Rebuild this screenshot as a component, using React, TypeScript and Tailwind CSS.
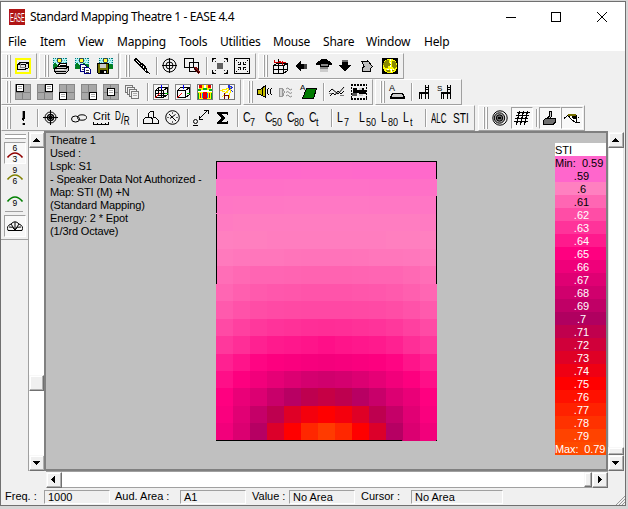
import React from "react";

type Kids = { children?: React.ReactNode };

/* ---------- colour scale ---------- */

const STOPS: [number, number[]][] = [
  [0.59, [255, 102, 204]],
  [0.6, [255, 128, 192]],
  [0.65, [255, 0, 128]],
  [0.7, [176, 0, 96]],
  [0.75, [255, 0, 0]],
  [0.8, [255, 84, 0]],
];

function stiColor(v: number): string {
  for (let i = 1; i < STOPS.length; i++) {
    const [hi, b] = STOPS[i];
    const [lo, a] = STOPS[i - 1];
    if (v <= hi) {
      const t = (v - lo) / (hi - lo);
      return `rgb(${a.map((c, k) => Math.round(c + (b[k] - c) * t)).join(",")})`;
    }
  }
  return "rgb(255,84,0)";
}

/* Left half of each row including the centre column; the hall is symmetric. */
const HALF_ROWS: number[][] = [
  [0.591, 0.591, 0.591, 0.591, 0.5912, 0.5915, 0.5915],
  [0.5938, 0.594, 0.594, 0.594, 0.5942, 0.5942, 0.5942],
  [0.596, 0.5965, 0.5965, 0.5965, 0.597, 0.597, 0.597],
  [0.598, 0.599, 0.599, 0.599, 0.599, 0.599, 0.599],
  [0.6, 0.6005, 0.6005, 0.601, 0.601, 0.601, 0.601],
  [0.6025, 0.6035, 0.604, 0.604, 0.6045, 0.605, 0.605],
  [0.607, 0.609, 0.6105, 0.6105, 0.611, 0.6115, 0.6115],
  [0.61, 0.613, 0.615, 0.616, 0.6165, 0.617, 0.617],
  [0.615, 0.618, 0.62, 0.621, 0.6215, 0.622, 0.622],
  [0.621, 0.625, 0.628, 0.63, 0.631, 0.632, 0.6325],
  [0.628, 0.632, 0.637, 0.64, 0.641, 0.642, 0.644],
  [0.637, 0.642, 0.648, 0.651, 0.653, 0.655, 0.6565],
  [0.644, 0.651, 0.658, 0.666, 0.672, 0.677, 0.68],
  [0.65, 0.663, 0.672, 0.685, 0.695, 0.709, 0.714],
  [0.653, 0.669, 0.687, 0.709, 0.73, 0.743, 0.75],
  [0.658, 0.673, 0.696, 0.728, 0.75, 0.773, 0.785],
];
const CELLS = HALF_ROWS.flatMap((r) => [...r, ...r.slice(0, 6).reverse()]);

const LEGEND = Array.from({ length: 21 }, (_, i) => 59 + i);

/* ---------- icon helpers ---------- */

function Ic({ children, w = 16 }: Kids & { w?: number }) {
  return (
    <svg width={w} height="16" viewBox={`0 0 ${w} 16`} fill="none" stroke="none" shapeRendering="crispEdges" className="block shrink-0 overflow-visible">
      {children}
    </svg>
  );
}

const L = ({ d, c = "#000", w = 1, f = "none", aa = false }: { d: string; c?: string; w?: number; f?: string; aa?: boolean }) => (
  <path d={d} stroke={c} strokeWidth={w} fill={f} shapeRendering={aa ? "auto" : "crispEdges"} />
);
const F = ({ d, c = "#000" }: { d: string; c?: string }) => <path d={d} fill={c} />;

const Frame3D = () => (
  <Ic>
    <L d="M1 1H15V15H1Z" c="#ffff00" w={2} />
    <L d="M2.5 6.5H10.5V11.5H2.5ZM4.5 6V4.5H13.5V9.5M4.5 4.5L2.5 6.5M13.5 4.5L10.5 6.5M13.5 9.5L10.5 11.5" f="#e4e4e4" />
    <L d="M5 9.5H11M5.5 5V9" c="#888" />
  </Ic>
);

const Scene = () => (
  <>
    <F d="M0 0H14V9H0Z" c="#b8f4f4" />
    <F d="M0 6L2 5L5 8L9 5L14 7V11H0Z" c="#008020" />
    <path d="M0 .5H14M.5 0V9M13.5 0V7" stroke="#007878" strokeDasharray="1 1" />
    <path d="M1 2.5H13M2 4.5H13" stroke="#50d0d8" strokeDasharray="1 1" />
    <F d="M5 1H8V4H5Z" c="#ffff30" />
    <L d="M4.5 1V4M5 .5H8M8.5 1V4M5 4.5H8" c="#444" />
  </>
);
const PrintIcon = () => (
  <Ic>
    <Scene />
    <L d="M6.5 5.5H13.5L12.5 9.5H4.5Z" f="#fff" />
    <L d="M1.5 10.5L4.5 8.5H15.5V12.5L12.5 15.5H3.5L1.5 13.5Z" f="#c8c8c8" />
    <L d="M2 13.5H13M7 7.5H12M2 10.5H13L15 9" />
    <F d="M4 11H11V12H4Z" c="#eee" />
  </Ic>
);
const CopyIcon = () => (
  <Ic>
    <Scene />
    <L d="M5.5 6.5H9.5L11.5 8.5V13.5H5.5Z" c="#000080" f="#fff" />
    <L d="M9.5 9.5H13.5L15.5 11.5V15.5H9.5Z" c="#000080" f="#fff" />
    <L d="M7 9.5H9M7 11.5H9M11 12.5H14M11 14H14" c="#444" />
  </Ic>
);
const SaveIcon = () => (
  <Ic>
    <g transform="translate(2 0)"><Scene /></g>
    <L d="M.5 5.5H11.5V15.5H1.5L.5 14.5Z" f="#707000" />
    <F d="M3 6H9V10H3Z" c="#c8c8c8" />
    <F d="M3 12H10V15H3Z" />
    <F d="M7 13H9V15H7Z" c="#eee" />
  </Ic>
);
const BrushIcon = () => (
  <Ic>
    <L d="M.5 2L2 .5L7 5.5L5.5 7Z" f="#fff" />
    <F d="M5 6L8 5L12 8L14 14L16 16L11 14L6 9Z" />
    <F d="M7 7H8V8H7ZM9 8H10V10H9ZM11 11H12V13H11Z" c="#fff" />
  </Ic>
);
const TargetIcon = () => (
  <Ic>
    <L d="M7.5 0V15M0 7.5H15" />
    <circle cx="7.5" cy="7.5" r="6.5" stroke="#000" shapeRendering="auto" />
    <circle cx="7.5" cy="7.5" r="3.5" stroke="#000" shapeRendering="auto" />
  </Ic>
);
const RectsIcon = () => (
  <Ic>
    <L d="M.5 .5H9.5V9.5H.5ZM5.5 4.5H14.5V13.5H5.5Z" />
    <F d="M10 9H13L16 14L14 16L10 12Z" c="#801010" />
    <L d="M9.5 9.5L15 15" />
  </Ic>
);
const FitIcon = () => (
  <Ic>
    <F d="M5 5H11V11H5Z" c="#606060" />
    <L d="M.5 4V.5H4M12 .5H15.5V4M.5 12V15.5H4M12 15.5H15.5V12" />
    <path d="M1 1L4 4M15 1L12 4M1 15L4 12M15 15L12 12" stroke="#333" strokeDasharray="1.5 1" />
  </Ic>
);
const ShrinkIcon = () => (
  <Ic>
    <L d="M.5 .5H15.5V15.5H.5Z" />
    <path d="M2 2L6 6M14 2L10 6M2 14L6 10M14 14L10 10" stroke="#000" strokeDasharray="1.5 1" />
    <L d="M6.5 4V6.5H4M9.5 4V6.5H12M4 9.5H6.5V12M9.5 12V9.5H12" />
  </Ic>
);
const RotateIcon = () => (
  <Ic>
    <L d="M1.5 7.5H11.5V15.5H1.5ZM1.5 7.5L4.5 5.5H15.5V12.5L11.5 15.5M11.5 7.5L15.5 5.5M1.5 11.5H15.5M6.5 1V15" />
    <L d="M2.5 2V4.5H9M9 4.5H13.5M10 2.5V6.5M7 3.5H9" c="#d00000" />
  </Ic>
);
const LeftArrow = () => (
  <Ic><F d="M1 8L7 2V6H13V11H7V14Z" /><F d="M10 6H13V11H10Z" c="#444" /></Ic>
);
const HouseArrow = () => (
  <Ic>
    <F d="M0 5L6 1H10L16 5V7H0Z" /><F d="M4 6H12V14H4Z" c="#888" /><F d="M4 11H12V14H4Z" c="#ccc" />
    <L d="M4 6V8.5H12V6" />
  </Ic>
);
const DownArrow = () => (
  <Ic><F d="M4 2H10V7H13L7 14L1 7H4Z" /><F d="M4 2H10V4H4Z" c="#666" /></Ic>
);
const DiagArrow = () => (
  <Ic><L d="M1.5 3.5H7.5V2.5L12.5 8.5L10.5 10.5V13.5H2.5V9.5L4.5 8.5Z" f="#c0c0c0" /></Ic>
);
const GlobeIcon = () => (
  <Ic>
    <F d="M0 0H16V16H0Z" />
    <circle cx="8" cy="8" r="7.3" fill="#ffff00" />
    <F d="M4 2H7V5H9V8H6V10H3L1 6ZM10 3H13L15 8L12 11L10 9V6ZM4 12H8V14L5 14ZM10 12H12V13H10Z" c="#8a8a00" />
    <path d="M8.5 1V9M5 11.5H12M9.5 12V15" stroke="#fff" strokeDasharray="2 1" />
  </Ic>
);

/* Four grey quarters with a sheet placed over one of them. */
const Quad = ({ x, y }: { x: number; y: number }) => (
  <Ic>
    <F d="M0 0H16V16H0Z" c="#a8a8a8" />
    <L d="M7.5 0V16M0 8.5H16" c="#808080" />
    <L d="M.5 0V16M15.5 0V16M0 .5H16M0 15.5H16" c="#888" />
    <g transform={`translate(${x} ${y})`}>
      <L d="M.5 .5H7.5V7.5H.5Z" f="#fff" /><L d="M2 2.5H6M2 4.5H6" c="#aaa" />
    </g>
  </Ic>
);
const StackIcon = () => (
  <Ic>
    {[0, 2, 4, 6].map((n) => (
      <g key={n} transform={`translate(${n} ${n + 1})`}><L d="M.5 .5H7.5V7.5H.5Z" c="#777" f="#f2f2f2" /></g>
    ))}
    <L d="M8 9.5H12M8 11.5H12" c="#aaa" />
  </Ic>
);
const BoxAxes = ({ filled = false }: { filled?: boolean }) => (
  <Ic>
    <L d="M.5 .5H15.5V15.5H.5Z" c="#888" f="#f6f6f6" />
    <L d="M2.5 6.5H10.5V13.5H2.5ZM5.5 3.5H14.5V10.5M2.5 6.5L5.5 3.5M10.5 6.5L14.5 3.5M10.5 13.5L14.5 10.5" />
    {filled && <L d="M5.5 4V11H14M8.5 3V13M3 9.5H14" />}
    <L d="M8.5 1V5" c="#0000ff" /><L d="M12 9.5H15" c="#00c000" /><L d="M2 14L7 9" c="#ff0000" />
  </Ic>
);
const MapsIcon = () => (
  <Ic>
    <L d="M.5 .5H15.5V15.5H.5Z" c="#777" f="#fff" />
    <F d="M2 1H7V6H2ZM9 1H14V6H9Z" c="#ffdf00" /><F d="M2 1H5V4H2ZM11 1H14V4H11Z" c="#e00000" />
    <F d="M1 5H4V7H1ZM6 4H10V6H6ZM12 5H15V7H12Z" c="#00b020" />
    <F d="M1 8H15V15H1Z" c="#ffff00" /><F d="M6 8H10V15H6ZM3 9H4V14H3ZM12 9H13V14H12Z" c="#f00000" />
    <F d="M5 9H6V14H5ZM10 9H11V14H10Z" c="#0080ff" /><F d="M1 9H2V15H1ZM14 9H15V15H14Z" c="#00a020" />
  </Ic>
);
const RayIcon = () => (
  <Ic>
    <L d="M.5 .5H15.5V15.5H.5Z" c="#777" f="#f8f8f8" />
    <L d="M1 6.5L12 4L10 14M2 6.5L9 9M3 13L12 3" c="#ffe800" />
    <L d="M9.5 1.5L13.5 3.5L10.5 5.5ZM12 6L14 8" c="#2030e0" />
    <L d="M5.5 9V15M5 11.5H9.5V15" c="#700000" />
  </Ic>
);
const SpeakerIcon = () => (
  <Ic>
    <L d="M.5 5.5H3.5L8.5 1.5V13.5L3.5 10.5H.5Z" f="#c8c000" /><L d="M5.5 4V12" />
    <L d="M12 4.5H11.5L10.5 6V9L11.5 10.5H12M15 4.5H14.5L13.5 6V9L14.5 10.5H15" />
  </Ic>
);
const WavesIcon = () => (
  <Ic>
    <L d="M.5 4.5H3.5V12.5H.5ZM3.5 4.5Q7 7.5 3.5 12.5" c="#999" f="#d5d5d5" />
    <L d="M7 5Q9 3 10 5T13 5M7 8.5Q9 6.5 10 8.5T13 8.5M7 12Q9 10 10 12T13 12" c="#888" aa />
  </Ic>
);
const AreaIcon = () => (
  <Ic>
    <L d="M5.5 4.5H15.5L12.5 14.5H1.5Z" f="#007a00" />
    <text x="-1" y="6" fontSize="8" fill="#000" className="font-['Liberation_Sans',sans-serif]">A</text>
  </Ic>
);
const CurveIcon = () => (
  <Ic><L d="M0 8L3 5L9 10L15 3M1 12L4 9L6 11L9 7L12 10L15 7" aa /><L d="M0 9.5H3M11 11.5H15" c="#777" /></Ic>
);
const FilmIcon = () => (
  <Ic>
    <path d="M0 1H16M0 15H16" stroke="#000" strokeWidth="2" strokeDasharray="2 1" />
    <path d="M.5 0V16M15.5 0V16" stroke="#000" strokeDasharray="2 1" />
    <F d="M2 4H6V6H9V4H13V6H15V10H12V12H8V9H2Z" /><F d="M8 4H11V6H8ZM8 10H12V12H8Z" c="#ccc" /><F d="M1 9H6V12H1Z" c="#555" />
  </Ic>
);
const DeskIcon = () => (
  <Ic>
    <L d="M3.5 9.5H13.5L15.5 13.5H1.5Z" f="#ccc" /><L d="M1 14.5H16" />
    <text x="0" y="7" fontSize="9" fill="#000" className="font-['Liberation_Sans',sans-serif]">A</text>
  </Ic>
);
const Chair = ({ s = false }: { s?: boolean }) => (
  <Ic>
    {s && <text x="-2" y="7" fontSize="8" fill="#000" className="font-['Liberation_Sans',sans-serif]">S</text>}
    <g transform="translate(2 0)">
      <L d="M6.5 1V15M9.5 1V15M6 3.5H10M6 5.5H10M.5 15V8.5H9.5M2.5 15V9M1 9.5H9" />
    </g>
  </Ic>
);
const BangIcon = () => (
  <Ic><F d="M7 1H10V8L9 11H8L7 8ZM7 13H10V15H7Z" /><F d="M7 1H8V8H7ZM7 13H8V15H7Z" c="#999" /></Ic>
);
const CrossTarget = () => (
  <Ic>
    <circle cx="7.5" cy="7.5" r="5.5" stroke="#000" shapeRendering="auto" />
    <circle cx="7.5" cy="7.5" r="3" stroke="#000" strokeWidth="1.5" shapeRendering="auto" />
    <L d="M7.5 0V15M0 7.5H15" />
    <F d="M6 6H9V9H6Z" />
  </Ic>
);
const ChainIcon = () => (
  <Ic>
    <ellipse cx="4.5" cy="9" rx="4" ry="3" stroke="#000" shapeRendering="auto" />
    <ellipse cx="11" cy="7.5" rx="4.5" ry="2.7" stroke="#000" shapeRendering="auto" />
  </Ic>
);
const HallIcon = () => (
  <Ic><L d="M.5 13.5V9.5L2.5 7.5H5.5V3.5L7.5 1.5H10.5V7.5H12.5L15.5 10.5V13.5ZM5.5 7.5H8.5L9.5 9.5V13.5" w={1.3} /></Ic>
);
const ClockIcon = () => (
  <Ic>
    <circle cx="7.5" cy="7.5" r="6.8" stroke="#000" shapeRendering="auto" />
    <L d="M4 4L11 11M10.5 4.5L5 8.5" aa /><L d="M7.5 2V4M2 7.5H4M11 7.5H13M7.5 11V13" c="#666" />
  </Ic>
);
const VectorIcon = () => (
  <Ic><circle cx="2.5" cy="11.5" r="2" stroke="#000" shapeRendering="auto" /><L d="M0 15.5H5M6 9L15 0M11 .5H15.5V4M6.5 6V9.5H10" /></Ic>
);
const SigmaIcon = () => (
  <Ic><F d="M2 2H13V5H12L11 4H6L10 8L6 12H11L12 11H13V14H2V12L6 8L2 4Z" /></Ic>
);
const SpiralIcon = () => (
  <Ic>
    <circle cx="8" cy="8" r="7.2" stroke="#000" fill="#eee" shapeRendering="auto" />
    <circle cx="7.5" cy="8" r="5.2" stroke="#000" fill="#aaa" shapeRendering="auto" />
    <circle cx="7.5" cy="8" r="3.2" stroke="#000" fill="#666" shapeRendering="auto" />
    <circle cx="7.5" cy="8" r="1.2" fill="#000" />
  </Ic>
);
const MeshIcon = () => (
  <Ic><L d="M5.5 1L2.5 15M9.5 1L6.5 15M13.5 1L10.5 15" w={1.3} /><L d="M3 2.5H16M2 5.5H15M1 8.5H14M0 11.5H14" /></Ic>
);
const SeatIcon = () => (
  <Ic><L d="M7.5 1.5H9.5V6.5L7.5 8.5H5.5V7.5L7.5 6.5Z" f="#ccc" /><L d="M1.5 10.5L3.5 8.5H13.5V12.5L11.5 13.5V14.5H1.5Z" f="#707070" /></Ic>
);
const EyeIcon = () => (
  <Ic>
    <L d="M0 8.5L5 4.5H11L15 7.5" /><L d="M4 4.5H12" c="#777000" w={2} />
    <F d="M5 6H14V8L12 12H9L6 9Z" c="#fff" /><L d="M4.5 6L8 10L12 12.5L13 7M13 12.5H15.5" /><F d="M8 6H13V9H9Z" />
  </Ic>
);

/* ---------- toolbars ---------- */

function Grip() {
  return (
    <div className="ml-1 mr-1 flex h-[22px] w-[5px] shrink-0 justify-between self-center">
      <i className="w-[2px] border-r border-[#a0a0a0] bg-white" />
      <i className="w-[2px] border-r border-[#a0a0a0] bg-white" />
    </div>
  );
}
const Sep = () => <div className="mr-[4px] h-[18px] w-[2px] shrink-0 self-center border-l border-[#a0a0a0] bg-white" />;
const Btn = ({ children }: Kids) => <div className="flex w-[22px] shrink-0 items-center">{children}</div>;
const Pressed = ({ children }: Kids) => (
  <div className="-ml-[3px] mr-[3px] flex h-[22px] w-[22px] shrink-0 items-center self-center border border-b-white border-l-[#a0a0a0] border-r-white border-t-[#a0a0a0] bg-[#f8f8f8] pl-[2px]">{children}</div>
);

function Group({ children, className = "" }: Kids & { className?: string }) {
  return (
    <div className={`flex h-[26px] border-b border-l border-r border-t border-b-[#a0a0a0] border-l-white border-r-[#a0a0a0] border-t-white ${className}`}>
      <Grip />
      {children}
    </div>
  );
}

/* Level and clarity symbols: a slim capital followed by a lowered index. */
const Sub = ({ a, b }: { a: string; b: string }) => (
  <span className="relative -top-px flex items-baseline text-[14px] leading-none">
    <span className="inline-block w-[7px] origin-left scale-x-75">{a}</span>
    <span className="relative top-[4px] inline-block w-[9px] origin-left scale-x-[0.82] text-[11px]">{b}</span>
  </span>
);

/* ---------- scroll bars ---------- */

const Tri = ({ d }: { d: string }) => (
  <svg width="8" height="8" viewBox="0 0 8 8" shapeRendering="crispEdges"><path d={d} fill="#000" /></svg>
);
const bevel = "border border-t-[#f8f8f8] border-l-[#f8f8f8] border-r-[#707070] border-b-[#707070] bg-[#f0f0f0] shadow-[inset_-1px_-1px_0_#b0b0b0,inset_1px_1px_0_#fff]";
const ScrollBtn = ({ d }: { d: string }) => (
  <div className={`flex h-4 w-4 shrink-0 items-center justify-center ${bevel}`}><Tri d={d} /></div>
);
const UP = "M3 2H4V3H5V4H6V5H7V6H0V5H1V4H2V3H3Z";
const DOWN = "M0 2H7V3H6V4H5V5H4V6H3V5H2V4H1V3H0Z";
const LEFT = "M5 0V7H4V6H3V5H2V4H1V3H2V2H3V1H4V0Z";
const RIGHT = "M2 0V7H3V6H4V5H5V4H6V3H5V2H4V1H3V0Z";

const Arc = ({ top, bottom, color }: { top?: string; bottom: string; color: string }) => (
  <svg width="18" height="20" viewBox="0 0 18 20" className="block overflow-visible font-['Liberation_Sans',sans-serif] text-[8.5px]">
    {top && <text x="5.5" y="7">{top}</text>}
    <path d="M.5 13.5Q8 4.5 15.5 13.5" fill="none" stroke={color} strokeWidth="1.7" />
    <text x="5.5" y="17.5">{bottom}</text>
  </svg>
);

const Field = ({ label, value, lw, bw }: { label: string; value: string; lw: string; bw: string }) => (
  <>
    <span className={lw}>{label}</span>
    <span className={`h-[14px] border border-b-white border-l-[#a0a0a0] border-r-white border-t-[#a0a0a0] pl-[3px] leading-[13px] ${bw}`}>{value}</span>
  </>
);

export default function App() {
  return (
    <div className="h-[509px] w-[628px] overflow-hidden bg-[#d6d6d6] pt-px font-['Liberation_Sans',Arial,sans-serif] text-[11px] text-black">
      <div className="flex h-[505px] w-[626px] flex-col border border-[#707070] bg-[#f0f0f0]">
        <header className="flex h-[30px] shrink-0 items-center bg-white pl-2 font-['Noto_Sans',sans-serif]">
          <svg width="16" height="16" viewBox="0 0 16 16" className="mr-[5px] shrink-0">
            <rect width="16" height="16" fill="#b01515" />
            <g transform="translate(1 12.8) scale(.42 1)">
              <text fontSize="13" fill="#fff" className="font-['Liberation_Sans',sans-serif]">EASE</text>
            </g>
          </svg>
          <h1 className="flex-1 whitespace-nowrap text-[12px] tracking-[-0.4px]">Standard Mapping Theatre 1 - EASE 4.4</h1>
          <svg width="105" height="12" viewBox="0 0 105 12" className="mr-[15px]" fill="none" stroke="#000">
            <path d="M1 6.5H11M46.5 1.5H55.5V10.5H46.5Z" shapeRendering="crispEdges" />
            <path d="M92 1L102 11M102 1L92 11" />
          </svg>
        </header>
        <nav className="flex h-[19px] shrink-0 items-center bg-white pl-[7px] font-['Noto_Sans',sans-serif] text-[12px] tracking-[-0.2px]">
          <span className="w-8">File</span>
          <span className="w-[38px]">Item</span>
          <span className="w-[39px]">View</span>
          <span className="w-[62px]">Mapping</span>
          <span className="w-[41px]">Tools</span>
          <span className="w-[53px]">Utilities</span>
          <span className="w-[50px]">Mouse</span>
          <span className="w-[43px]">Share</span>
          <span className="w-[58px]">Window</span>
          <span>Help</span>
        </nav>

        <div className="flex h-[80px] shrink-0 flex-col pt-[2px]">
          <div className="flex">
            <Group className="w-[36px]"><Btn><Frame3D /></Btn></Group>
            <Group className="ml-[2px] w-[80px]"><Btn><PrintIcon /></Btn><Btn><CopyIcon /></Btn><Btn><SaveIcon /></Btn></Group>
            <Group className="ml-px w-[136px]">
              <Btn><BrushIcon /></Btn><Sep /><Btn><TargetIcon /></Btn><Btn><RectsIcon /></Btn><Sep /><Btn><FitIcon /></Btn><Btn><ShrinkIcon /></Btn>
            </Group>
            <Group className="ml-[2px] w-[146px]">
              <Btn><RotateIcon /></Btn><Btn><LeftArrow /></Btn><Btn><HouseArrow /></Btn><Btn><DownArrow /></Btn><Btn><DiagArrow /></Btn><Btn><GlobeIcon /></Btn>
            </Group>
          </div>
          <div className="flex">
            <Group className="w-[240px]">
              <Btn><Quad x={1} y={0} /></Btn><Btn><Quad x={8} y={0} /></Btn><Btn><Quad x={0} y={8} /></Btn><Btn><Quad x={8} y={8} /></Btn><Btn><Quad x={4} y={4} /></Btn><Btn><StackIcon /></Btn>
              <Sep />
              <Btn><BoxAxes filled /></Btn><Btn><BoxAxes /></Btn><Btn><MapsIcon /></Btn><Btn><RayIcon /></Btn>
            </Group>
            <Group className="ml-[2px] w-[130px]">
              <Btn><SpeakerIcon /></Btn><Btn><WavesIcon /></Btn><Btn><AreaIcon /></Btn><Sep /><Btn><CurveIcon /></Btn><Btn><FilmIcon /></Btn>
            </Group>
            <Group className="ml-[2px] w-[87px]"><Btn><DeskIcon /></Btn><Sep /><Btn><Chair /></Btn><Btn><Chair s /></Btn></Group>
          </div>
          <div className="flex">
            <Group className="w-[474px]">
              <Btn><BangIcon /></Btn><Sep /><Btn><CrossTarget /></Btn><Sep />
              <Btn><ChainIcon /></Btn>
              <Btn>
                <span className="flex flex-col">
                  <span className="w-4 text-[11px] leading-[11px]">Crit</span>
                  <svg width="17" height="3" stroke="#000" shapeRendering="crispEdges"><path d="M0 2.5H16M.5 0V3M4.5 1V3M8.5 1V3M12.5 1V3M15.5 0V3" /></svg>
                </span>
              </Btn>
              <Btn>
                <span className="flex w-4 origin-left scale-x-[0.68] items-center text-[12px] leading-none">
                  <span className="relative -top-[2px]">D</span><span className="text-[15px]">/</span><span className="relative top-[3px]">R</span>
                </span>
              </Btn>
              <Sep />
              <Btn><HallIcon /></Btn><Btn><ClockIcon /></Btn><Sep />
              <Btn><VectorIcon /></Btn><Btn><SigmaIcon /></Btn><Sep />
              <Btn><Sub a="C" b="7" /></Btn><Btn><Sub a="C" b="50" /></Btn><Btn><Sub a="C" b="80" /></Btn><Btn><Sub a="C" b="t" /></Btn><Sep />
              <Btn><Sub a="L" b="7" /></Btn><Btn><Sub a="L" b="50" /></Btn><Btn><Sub a="L" b="80" /></Btn><Btn><Sub a="L" b="t" /></Btn><Sep />
              <Btn><span className="w-4 origin-left scale-x-[0.53] text-[15px]">ALC</span></Btn>
              <Btn><span className="w-4 origin-left scale-x-[0.68] text-[15px]">STI</span></Btn>
            </Group>
            <Group className="ml-[3px] w-[107px]">
              <Btn><SpiralIcon /></Btn><Pressed><MeshIcon /></Pressed><Sep /><Pressed><SeatIcon /></Pressed><Pressed><EyeIcon /></Pressed>
            </Group>
          </div>
        </div>

        <main className="flex h-[357px] shrink-0">
          <aside className="flex w-[27px] flex-col pt-px">
            <div className="ml-1 mt-[2px] h-[5px] w-[21px] shrink-0 border-y border-[#a0a0a0] bg-white" />
            <div className="ml-[3px] mt-[3px] h-[22px] w-[22px] shrink-0 border border-b-white border-l-[#a0a0a0] border-r-white border-t-[#a0a0a0] bg-[#f8f8f8] pl-[2px] pt-px"><Arc top="6" bottom="3" color="#900000" /></div>
            <div className="ml-[6px] mt-[2px]"><Arc top="9" bottom="6" color="#808000" /></div>
            <div className="ml-[6px] mt-[2px]"><Arc bottom="9" color="#008000" /></div>
            <div className="ml-1 mt-[3px] h-px w-[18px] shrink-0 bg-[#a0a0a0]" />
            <div className="ml-[3px] mt-[3px] flex h-[22px] w-[22px] shrink-0 items-center border border-b-white border-l-[#a0a0a0] border-r-white border-t-[#a0a0a0] bg-[#f8f8f8] pl-[2px]">
              <svg width="16" height="11" viewBox="0 0 16 11" fill="none" stroke="#000">
                <path d="M1 9.5Q-1 5 4 3Q8-1.5 12 3Q17 5 15 9.5ZM4 3L8 9L12 3M8 1V9M2 6Q6 5 8 9Q10 5 14 6" />
              </svg>
            </div>
            <div className="mt-[2px] h-px w-[27px] shrink-0 bg-[#a0a0a0]" />
          </aside>
          <div className="mt-px flex h-[339px] w-4 flex-col border-l border-[#a0a0a0] bg-white">
            <ScrollBtn d={UP} />
            <div className="h-[227px]" />
            <div className={`h-4 shrink-0 ${bevel}`} />
            <div className="flex-1" />
            <ScrollBtn d={DOWN} />
          </div>
          <div className="flex w-[581px] flex-col">
            <div className="flex h-[340px]">
              <section className="flex h-[340px] w-[564px] items-start border-2 border-[#808080] bg-[#c0c0c0]">
                <div className="w-[170px] whitespace-nowrap pl-1 pt-px text-[11px] leading-[13px] tracking-[-0.14px]">
                  <p>Theatre 1</p>
                  <p>Used :</p>
                  <p>Lspk: S1</p>
                  <p>- Speaker Data Not Authorized -</p>
                  <p>Map: STI (M) +N</p>
                  <p>(Standard Mapping)</p>
                  <p>Energy: 2 * Epot</p>
                  <p>(1/3rd Octave)</p>
                </div>
                <div className="relative mt-[28px] grid h-[280px] w-[221px] shrink-0 grid-cols-[repeat(13,17px)] grid-rows-[18px_17px_18px_17px_18px_17px_18px_17px_18px_17px_18px_17px_17px_18px_17px_18px]">
                  {CELLS.map((v, i) => (
                    <i key={i} style={{ backgroundColor: stiColor(v) }} />
                  ))}
                  <svg className="absolute inset-0" width="221" height="280" shapeRendering="crispEdges" fill="none" stroke="#000">
                    <path d="M0 .5H221M.5 0V18M.5 35V52M.5 53V123M220.5 0V18M220.5 35V123M0 279.5H186M220 279.5H221" />
                  </svg>
                </div>
                <div className="ml-[118px] mt-[10px] grid w-[51px] shrink-0 auto-rows-[13px] whitespace-pre text-[11px] leading-[15px] text-white">
                  <div className="bg-white text-black">STI</div>
                  <div className="bg-[#ff66cc] text-black">Min:  0.59</div>
                  {LEGEND.map((n) => (
                    <div key={n} className={`pl-[2px] text-center ${n < 62 ? "text-black" : ""}`} style={{ backgroundColor: stiColor(n / 100) }}>
                      {n % 10 === 0 ? `.${n / 10}` : `.${n}`}
                    </div>
                  ))}
                  <div className="bg-[#ff4a00] tracking-[-0.1px]">Max:  0.79</div>
                </div>
              </section>
              <div className="mt-px flex h-[339px] w-4 flex-col bg-white">
                <ScrollBtn d={UP} />
                <div className="flex-1 border-x border-[#e4e4e4]" />
                <div className={`h-2 ${bevel}`} />
                <ScrollBtn d={DOWN} />
              </div>
            </div>
            <div className="ml-[2px] flex h-[17px] w-[562px] border-b border-t border-[#a0a0a0] bg-white">
              <ScrollBtn d={LEFT} />
              <div className="flex-1" />
              <div className={`w-2 ${bevel}`} />
              <ScrollBtn d={RIGHT} />
            </div>
          </div>
        </main>

        <footer className="flex flex-1 items-center whitespace-nowrap pl-1">
          <Field label="Freq. :" value="1000" lw="w-[39px]" bw="w-[66px]" />
          <Field label="Aud. Area :" value="A1" lw="ml-[5px] w-[65px]" bw="w-[66px]" />
          <Field label="Value :" value="No Area" lw="ml-[6px] w-[37px]" bw="w-[66px]" />
          <Field label="Cursor :" value="No Area" lw="ml-[6px] w-[50px]" bw="w-[92px]" />
          <svg width="9" height="9" viewBox="0 0 9 9" className="ml-auto self-end" stroke="#999"><path d="M0 9L9 0M3 9L9 3M6 9L9 6" /></svg>
        </footer>
      </div>
    </div>
  );
}
